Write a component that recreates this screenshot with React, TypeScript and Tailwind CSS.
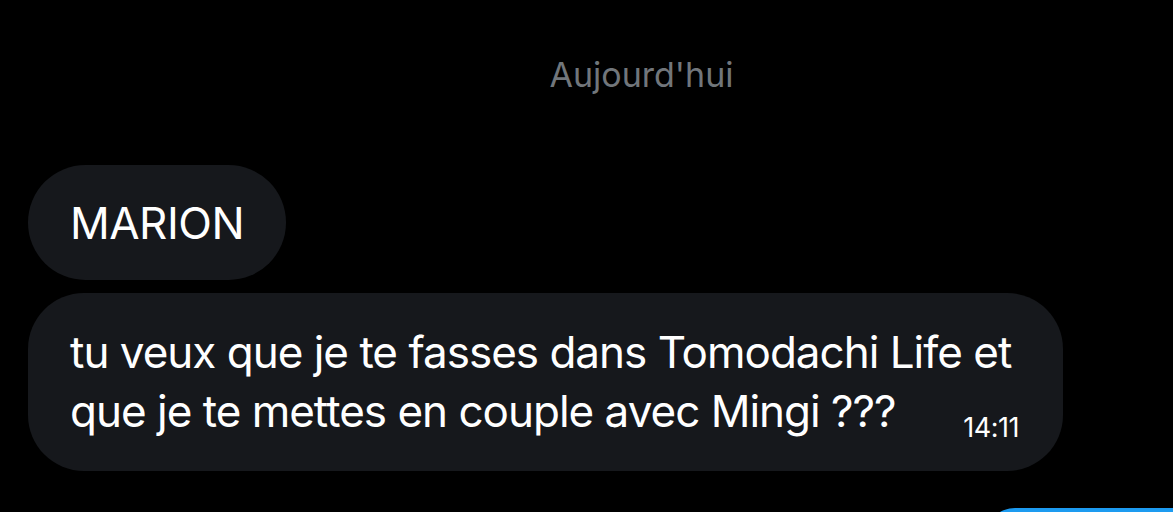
import React from 'react';

export default function App() {
  return (
    <div className="w-[1173px] h-[512px] bg-black overflow-hidden relative" style={{ fontFamily: 'Inter, "Open Sans", sans-serif' }}>
      {/* date separator */}
      <div className="pl-[110px] pt-[54px] text-center text-[34px] leading-[42px] text-[#71767b]">
        Aujourd'hui
      </div>

      <div className="pl-[28px] pt-[69px] flex flex-col gap-[13px]">
        <div className="self-start h-[115px] rounded-full bg-[#16181c] px-[42px] flex items-center text-white text-[44px] tracking-[-0.5px]">
          MARION
        </div>

        <div className="relative w-[1035px] h-[178px] rounded-[56px] bg-[#16181c] pl-[42px] pt-[30px]">
          <p className="whitespace-nowrap text-white text-[44px] leading-[59px] tracking-[-1px]">
            tu veux que je te fasses dans Tomodachi Life et
            <br />
            que je te mettes en couple avec Mingi ???
          </p>
          <span className="absolute right-[44px] bottom-[26px] text-[27px] leading-[34px] tracking-[-0.5px] text-white">14:11</span>
        </div>
      </div>

      {/* edge of the next (sent) bubble */}
      <div className="absolute left-[985px] top-[508px] w-[260px] h-[60px] rounded-[40px] bg-[#1d9bf0]" />
    </div>
  );
}
